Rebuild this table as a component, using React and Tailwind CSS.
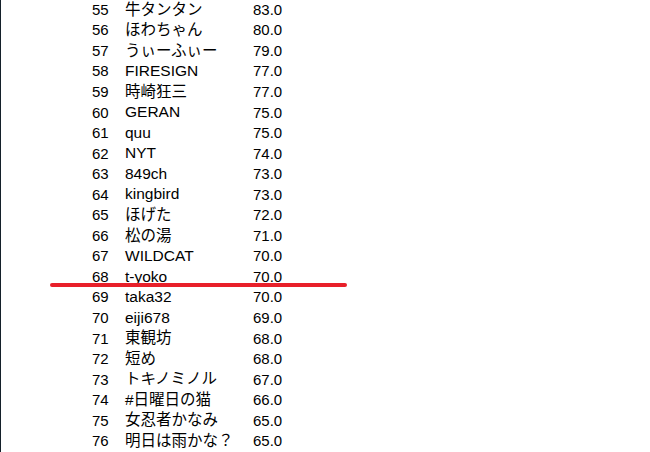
import React from 'react';

const rows = [
  [55, '牛タンタン', '83.0'],
  [56, 'ほわちゃん', '80.0'],
  [57, 'うぃーふぃー', '79.0'],
  [58, 'FIRESIGN', '77.0'],
  [59, '時崎狂三', '77.0'],
  [60, 'GERAN', '75.0'],
  [61, 'quu', '75.0'],
  [62, 'NYT', '74.0'],
  [63, '849ch', '73.0'],
  [64, 'kingbird', '73.0'],
  [65, 'ほげた', '72.0'],
  [66, '松の湯', '71.0'],
  [67, 'WILDCAT', '70.0'],
  [68, 't-yoko', '70.0'],
  [69, 'taka32', '70.0'],
  [70, 'eiji678', '69.0'],
  [71, '東観坊', '68.0'],
  [72, '短め', '68.0'],
  [73, 'トキノミノル', '67.0'],
  [74, '#日曜日の猫', '66.0'],
  [75, '女忍者かなみ', '65.0'],
  [76, '明日は雨かな？', '65.0'],
];

const App = () => {
  return (
    <div className="relative w-[650px] h-[452px] overflow-hidden bg-white border-l border-[#14202a] font-['Liberation_Sans','Noto_Sans_CJK_JP',sans-serif] text-black">
      {/* Ranking list */}
      <div className="mt-[-1px] pl-[91px]">
        {rows.map(([rank, name, score]) => (
          <div key={rank} className="flex items-center h-[20.55px] leading-none">
            <span className="w-[33px] text-[15px]">{rank}</span>
            <span className="w-[128px] text-[15.5px] whitespace-nowrap">{name}</span>
            <span className="text-[15px]">{score}</span>
          </div>
        ))}
      </div>

      {/* Red marker line under row 68 */}
      <div className="absolute left-[49px] top-[283px] w-[297px] h-[3.5px] rounded-full bg-[#e8202a]"></div>
    </div>
  );
};

export default App;
